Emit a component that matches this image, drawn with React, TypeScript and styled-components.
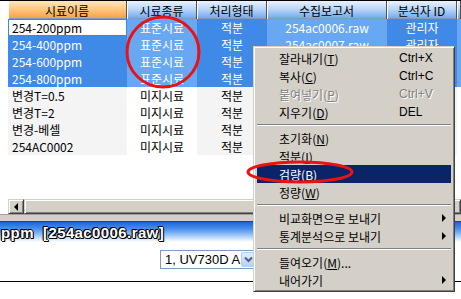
import React from 'react';
import styled, { createGlobalStyle } from 'styled-components';

const GlobalStyle = createGlobalStyle`
  html, body {
    margin: 0;
    padding: 0;
    background: #ffffff;
  }
  body {
    font-family: 'Noto Sans CJK KR', 'Liberation Sans', sans-serif;
  }
`;

const COLS = '8px 119px 70px 70px 120px 70px 1fr';

const Screen = styled.div`
  position: relative;
  width: 461px;
  height: 299px;
  overflow: hidden;
  background: #ffffff;
  display: flex;
  flex-direction: column;
`;

const GridPanel = styled.div`
  height: 198px;
  border-top: 1px solid #000;
  background: #ffffff;
`;

const HeaderRow = styled.div`
  display: grid;
  grid-template-columns: ${COLS};
  height: 18px;
`;

const HeaderCell = styled.div<{ $sorted?: boolean; $blank?: boolean }>`
  display: flex;
  align-items: center;
  justify-content: center;
  font-size: 12px;
  color: #000;
  white-space: nowrap;
  overflow: hidden;
  box-sizing: border-box;
  border-right: ${({ $blank }) => ($blank ? 'none' : '1px solid #505050')};
  box-shadow: ${({ $blank }) => ($blank ? 'none' : 'inset 1px 0 #ffffff, inset 0 -1px #7a9cc8')};
  background: ${({ $sorted, $blank }) =>
    $blank
      ? '#ffffff'
      : $sorted
        ? 'linear-gradient(to bottom, #ffe6c0 0%, #ffc47c 50%, #f99c3e 100%)'
        : 'linear-gradient(to bottom, #eaf2fd 0%, #b4d2f7 50%, #6aa6ee 100%)'};
`;

const Row = styled.div`
  display: grid;
  grid-template-columns: ${COLS};
  height: 17px;
`;

const Cell = styled.div<{ $selected: boolean; $even: boolean; $left?: boolean; $focus?: boolean }>`
  box-sizing: border-box;
  font-size: 12px;
  line-height: 15px;
  white-space: nowrap;
  overflow: hidden;
  text-align: ${({ $left }) => ($left ? 'left' : 'center')};
  color: ${({ $selected, $focus }) => ($selected && !$focus ? '#ffffff' : '#000000')};
  border: ${({ $focus }) => ($focus ? '1px solid #3d86e0' : 'none')};
  padding: ${({ $focus }) => ($focus ? '0 4px 0 3px' : '1px 4px 0')};
  background: ${({ $selected, $even, $focus }) =>
    $focus ? '#ffffff' : $selected ? ($even ? '#68a7f2' : '#3f8ae6') : $even ? '#ffffff' : '#f4f4f4'};
`;

const Gutter = styled.div`
  background: #ffffff;
`;

const HScroll = styled.div`
  display: flex;
  height: 15px;
  margin-left: 8px;
  background: #d4d0c8;
`;

const ScrollButton = styled.div`
  width: 16px;
  box-sizing: border-box;
  display: flex;
  align-items: center;
  justify-content: center;
  background: #d4d0c8;
  border: 1px solid;
  border-color: #d4d0c8 #404040 #404040 #d4d0c8;
  box-shadow: inset 1px 1px #ffffff, inset -1px -1px #808080;
`;

const LeftArrow = styled.div`
  width: 0;
  height: 0;
  border-right: 4px solid #000;
  border-top: 4px solid transparent;
  border-bottom: 4px solid transparent;
  margin-left: -1px;
`;

const Thumb = styled.div`
  flex: 1;
  box-sizing: border-box;
  border: 1px solid;
  border-color: #d4d0c8 #404040 #404040 #d4d0c8;
  box-shadow: inset 1px 1px #ffffff, inset -1px -1px #808080;
`;

const Splitter = styled.div`
  height: 8px;
  box-sizing: border-box;
  background: #d4d0c8;
  border-top: 1px solid #a0a0a0;
  border-bottom: 1px solid #404040;
`;

const TitleBar = styled.div`
  height: 20px;
  display: flex;
  align-items: center;
  background: linear-gradient(to bottom, #1d63d6 0%, #4c90ec 35%, #a8ccf8 70%, #ffffff 100%);
  font-family: 'Liberation Sans', 'Noto Sans CJK KR', sans-serif;
  font-weight: bold;
  font-size: 15px;
  letter-spacing: 0.4px;
  color: #ffffff;
  white-space: pre;
  text-shadow: -1px 0 #000, 1px 0 #000, 0 -1px #000, 0 1px #000, 1px 1px #000, -1px -1px #000;
  padding-left: 1px;
`;

const ToolPanel = styled.div`
  height: 31px;
  border-bottom: 1px solid #000;
  display: flex;
  align-items: flex-start;
  padding: 8px 0 0 160px;
  box-sizing: content-box;
`;

const Combo = styled.div`
  width: 98px;
  height: 19px;
  box-sizing: border-box;
  border: 1px solid #7f9db9;
  display: flex;
  align-items: center;
  font-family: 'Liberation Sans', 'Noto Sans CJK KR', sans-serif;
  font-size: 13px;
  color: #000;
  padding-left: 4px;
`;

const ComboText = styled.span`
  flex: 1;
  white-space: nowrap;
`;

const ComboButton = styled.div`
  width: 15px;
  height: 15px;
  margin-right: 1px;
  border-radius: 2px;
  display: flex;
  align-items: center;
  justify-content: center;
  background: linear-gradient(to bottom, #e4edfd, #b6cef7);
  border: 1px solid #b8cdf2;
  box-sizing: border-box;
`;

const Menu = styled.div`
  position: absolute;
  left: 253px;
  top: 46px;
  width: 202px;
  box-sizing: border-box;
  background: #d4d0c8;
  border: 1px solid;
  border-color: #d4d0c8 #404040 #404040 #d4d0c8;
  box-shadow: inset 1px 1px #ffffff, inset -1px -1px #808080;
  padding: 2px;
  font-size: 12px;
`;

const MenuItem = styled.div<{ $active?: boolean; $disabled?: boolean }>`
  display: grid;
  grid-template-columns: 120px 1fr 14px;
  align-items: center;
  height: 18px;
  padding-left: 22px;
  margin: 0 1px;
  white-space: nowrap;
  background: ${({ $active }) => ($active ? '#0a246a' : 'transparent')};
  color: ${({ $active, $disabled }) => ($active ? '#ffffff' : $disabled ? '#808080' : '#000000')};
  text-shadow: ${({ $disabled }) => ($disabled ? '1px 1px #ffffff' : 'none')};
`;

const Shortcut = styled.span`
  font-family: 'Liberation Sans', 'Noto Sans CJK KR', sans-serif;
  font-size: 12px;
`;

const SubArrow = styled.span`
  width: 0;
  height: 0;
  margin-left: 5px;
  border-left: 4px solid #000;
  border-top: 4px solid transparent;
  border-bottom: 4px solid transparent;
`;

const Separator = styled.div`
  height: 8px;
  display: flex;
  align-items: center;
  margin: 0 1px;
  &::after {
    content: '';
    flex: 1;
    height: 0;
    border-top: 1px solid #808080;
    border-bottom: 1px solid #ffffff;
  }
`;

const Annotations = styled.svg`
  position: absolute;
  left: 0;
  top: 0;
  pointer-events: none;
`;

type SampleRow = [string, string, string, string, string];

// cells hidden under the context menu are left empty
const rows: { data: SampleRow; selected: boolean }[] = [
  { data: ['254-200ppm', '표준시료', '적분', '254ac0006.raw', '관리자'], selected: true },
  { data: ['254-400ppm', '표준시료', '적분', '254ac0007.raw', '관리자'], selected: true },
  { data: ['254-600ppm', '표준시료', '적분', '', ''], selected: true },
  { data: ['254-800ppm', '표준시료', '적분', '', ''], selected: true },
  { data: ['변경T=0.5', '미지시료', '적분', '', ''], selected: false },
  { data: ['변경T=2', '미지시료', '적분', '', ''], selected: false },
  { data: ['변경-베셀', '미지시료', '적분', '', ''], selected: false },
  { data: ['254AC0002', '미지시료', '적분', '', ''], selected: false },
];

const headers = ['시료이름', '시료종류', '처리형태', '수집보고서', '분석자 ID'];

type MenuEntry =
  | { sep: true }
  | { label: string; key?: string; shortcut?: string; tail?: string; sub?: boolean; active?: boolean; disabled?: boolean };

const menu: MenuEntry[] = [
  { label: '잘라내기', key: 'T', shortcut: 'Ctrl+X' },
  { label: '복사', key: 'C', shortcut: 'Ctrl+C' },
  { label: '붙여넣기', key: 'P', shortcut: 'Ctrl+V', disabled: true },
  { label: '지우기', key: 'D', shortcut: 'DEL' },
  { sep: true },
  { label: '초기화', key: 'N' },
  { label: '적분', key: 'I' },
  { label: '검량', key: 'B', active: true },
  { label: '정량', key: 'W' },
  { sep: true },
  { label: '비교화면으로 보내기', sub: true },
  { label: '통계분석으로 보내기', sub: true },
  { sep: true },
  { label: '들여오기', key: 'M', tail: '...' },
  { label: '내어가기', sub: true },
];

const App = () => {
  return (
    <>
      <GlobalStyle />
      <Screen>
        <GridPanel>
          <HeaderRow>
            <HeaderCell $blank />
            {headers.map((h, i) => (
              <HeaderCell key={h} $sorted={i === 0}>
                {h}
              </HeaderCell>
            ))}
            <HeaderCell />
          </HeaderRow>
          {rows.map((r, ri) => (
            <Row key={ri}>
              <Gutter />
              {r.data.map((v, ci) => (
                <Cell
                  key={ci}
                  $selected={r.selected}
                  $even={ci % 2 === 1}
                  $left={ci === 0}
                  $focus={ri === 0 && ci === 0}
                >
                  {v}
                </Cell>
              ))}
              <Cell $selected={r.selected} $even />
            </Row>
          ))}
        </GridPanel>
        <HScroll>
          <ScrollButton>
            <LeftArrow />
          </ScrollButton>
          <Thumb />
        </HScroll>
        <Splitter />
        <TitleBar>{'ppm  [254ac0006.raw]'}</TitleBar>
        <ToolPanel>
          <Combo>
            <ComboText>1, UV730D A</ComboText>
            <ComboButton>
              <svg width="9" height="7" viewBox="0 0 9 7">
                <path d="M1 1.5 L4.5 5 L8 1.5" fill="none" stroke="#4d6185" strokeWidth="2" />
              </svg>
            </ComboButton>
          </Combo>
        </ToolPanel>

        <Menu>
          {menu.map((m, i) =>
            'sep' in m ? (
              <Separator key={i} />
            ) : (
              <MenuItem key={i} $active={m.active} $disabled={m.disabled}>
                <span>
                  {m.label}
                  {m.key && (
                    <>
                      (<u>{m.key}</u>)
                    </>
                  )}
                  {m.tail}
                </span>
                <Shortcut>{m.shortcut}</Shortcut>
                {m.sub ? <SubArrow /> : <span />}
              </MenuItem>
            ),
          )}
        </Menu>

        <Annotations width="461" height="299" viewBox="0 0 461 299">
          <ellipse cx="163" cy="52" rx="36" ry="35" fill="none" stroke="#ee1111" strokeWidth="3" />
          <ellipse cx="300" cy="172" rx="52" ry="10" fill="none" stroke="#ee1111" strokeWidth="3" />
        </Annotations>
      </Screen>
    </>
  );
};

export default App;
